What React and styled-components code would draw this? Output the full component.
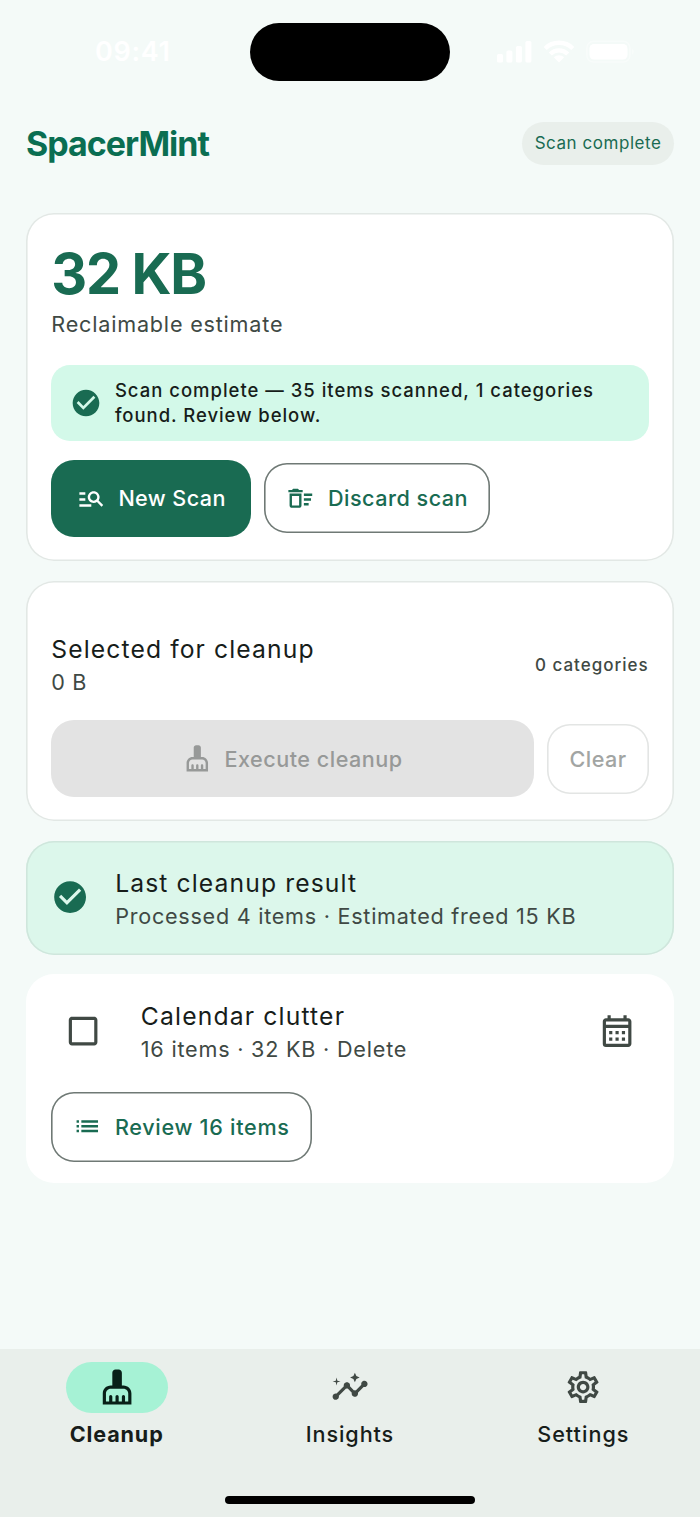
import React from "react";
import styled, { createGlobalStyle } from "styled-components";
import {
  MdCheckCircle,
  MdManageSearch,
  MdOutlineDeleteSweep,
  MdCheckBoxOutlineBlank,
  MdOutlineCalendarMonth,
  MdList,
  MdOutlineInsights,
  MdOutlineSettings,
} from "react-icons/md";

const c = {
  bg: "#f4faf8",
  brand: "#0a6e52",
  primary: "#196b52",
  ink: "#171d1a",
  muted: "#404944",
  surface: "#e9efeb",
  mint: "#d3f9e9",
  mintSoft: "#dcf7eb",
  pill: "#a6f2d5",
};

const GlobalStyle = createGlobalStyle`
  * { box-sizing: border-box; }
  body { margin: 0; background: ${c.bg}; font-family: Inter, "Liberation Sans", sans-serif; }
  button { font: inherit; }
  svg { display: block; flex: none; }
`;

const Screen = styled.div`
  width: 700px;
  height: 1517px;
  display: flex;
  flex-direction: column;
  background: ${c.bg};
  color: ${c.ink};
  overflow: hidden;
`;

const Label = styled.span`
  display: block;
  white-space: nowrap;
  width: max-content;
  font-size: ${(p) => p.$size}px;
  font-weight: ${(p) => p.$weight || 400};
  letter-spacing: ${(p) => p.$track || 0}px;
  line-height: ${(p) => p.$line || 32}px;
  color: ${(p) => p.$color || "inherit"};
`;

const StatusBar = styled.div`
  height: 103px;
  flex: none;
  display: grid;
  grid-template-columns: 250px 200px 250px;
  align-items: center;
  color: #fff;
`;
const Time = styled.div`
  padding: 1px 0 0 95px;
`;
const Island = styled.div`
  height: 58px;
  border-radius: 29px;
  background: #000;
`;
const Signals = styled.div`
  padding-left: 47px;
`;

const Header = styled.header`
  height: 80px;
  flex: none;
  padding: 0 26px;
  display: flex;
  align-items: center;
  justify-content: space-between;
`;
const Brand = styled.div`
  padding-top: 2px;
`;
const Chip = styled.div`
  height: 43px;
  padding: 0 12.5px 0 13px;
  border-radius: 22px;
  background: ${c.surface};
  display: flex;
  align-items: center;
`;

const Main = styled.main`
  flex: 1;
  padding: 30px 26px 0;
  display: flex;
  flex-direction: column;
  gap: 19.3px;
`;
const Card = styled.section`
  flex: none;
  height: ${(p) => p.$height}px;
  padding: 0 25.3px;
  border-radius: 28px;
  background: ${(p) => p.$bg || "#fff"};
  box-shadow: ${(p) => (p.$edge ? `inset 0 0 0 1.6px ${p.$edge}` : "none")};
  display: flex;
  flex-direction: column;
`;

const Estimate = styled.div`
  padding-top: 24px;
  height: 152px;
`;
const Amount = styled.div`
  height: 72px;
`;
const Banner = styled.div`
  height: 76px;
  padding: 0 18.6px;
  border-radius: 19px;
  background: ${c.mint};
  color: ${c.primary};
  display: flex;
  align-items: center;
  gap: 13px;
`;
const Actions = styled.div`
  display: flex;
  align-items: center;
  gap: 13px;
  margin-top: ${(p) => p.$top}px;
`;
const Button = styled.button`
  width: ${(p) => p.$width}px;
  height: 76.4px;
  flex: none;
  border: 0;
  padding: 0 0 0 ${(p) => p.$lead || 0}px;
  border-radius: 23px;
  background: ${(p) => p.$bg || c.primary};
  color: ${(p) => p.$color || "#fff"};
  display: flex;
  align-items: center;
  justify-content: ${(p) => (p.$lead ? "flex-start" : "center")};
  gap: 13px;
`;
const OutlineButton = styled(Button)`
  height: 70px;
  background: transparent;
  color: ${(p) => p.$color || c.primary};
  box-shadow: inset 0 0 0 1.6px ${(p) => p.$edge || "#6f7975"};
`;

const Tile = styled.div`
  height: ${(p) => p.$height}px;
  flex: none;
  padding: ${(p) => p.$pad || "0"};
  display: flex;
  align-items: center;
  gap: ${(p) => p.$gap || 0}px;
`;
const TileText = styled.div`
  flex: 1;
`;
const Trailing = styled.div`
  padding-top: 2px;
`;

const Nav = styled.nav`
  flex: none;
  height: 168.5px;
  background: ${c.surface};
  display: flex;
  flex-direction: column;
  justify-content: space-between;
  align-items: center;
  padding: 13.5px 0 13px;
`;
const Tabs = styled.div`
  width: 100%;
  display: grid;
  grid-template-columns: repeat(3, 1fr);
`;
const Tab = styled.div`
  display: flex;
  flex-direction: column;
  align-items: center;
  gap: 5px;
`;
const Pill = styled.div`
  width: 102px;
  height: 51px;
  border-radius: 26px;
  background: ${(p) => (p.$active ? c.pill : "transparent")};
  color: ${(p) => (p.$active ? "#082018" : c.muted)};
  display: flex;
  align-items: center;
  justify-content: center;
`;
const HomeBar = styled.div`
  width: 250px;
  height: 8px;
  border-radius: 4px;
  background: #000;
`;

function StatusIcons() {
  return (
    <svg width="140" height="24" viewBox="0 0 140 24" fill="#fff">
      <rect x="0" y="14" width="6" height="8.5" rx="1.6" />
      <rect x="9.4" y="10.4" width="6" height="12.1" rx="1.6" />
      <rect x="18.9" y="6" width="6" height="16.5" rx="1.6" />
      <rect x="28.4" y="1" width="6" height="21.5" rx="1.6" />
      <g fill="none" stroke="#fff" strokeWidth="4.4">
        <path d="M48.200 8.500a19.500 19.500 0 0 1 27.600 0" />
        <path d="M53.300 14a12.200 12.200 0 0 1 17.400 0" />
      </g>
      <path d="M62 22.500l-5.200-5.200a7.400 7.400 0 0 1 10.400 0z" />
      <rect x="89.9" y="1.3" width="43" height="20.8" rx="6.6" fill="none" stroke="#fff" strokeOpacity=".4" strokeWidth="1.5" />
      <rect x="92.5" y="3.9" width="38" height="15.6" rx="4.5" />
      <path d="M135.300 8.500q2.500 3.200 0 6.600z" fillOpacity=".5" />
    </svg>
  );
}

function BrushIcon({ size }) {
  return (
    <svg width={size} height={size} viewBox="0 0 24 24" fill="currentColor">
      <path d="M16 11h-1V3c0-1.100-.9-2-2-2h-2c-1.100 0-2 .9-2 2v8H8c-2.760 0-5 2.240-5 5v7h18v-7c0-2.760-2.240-5-5-5zm3 10h-2v-3c0-.55-.45-1-1-1s-1 .45-1 1v3h-2v-3c0-.55-.45-1-1-1s-1 .45-1 1v3H9v-3c0-.55-.45-1-1-1s-1 .45-1 1v3H5v-5c0-1.650 1.350-3 3-3h8c1.650 0 3 1.350 3 3v5z" />
    </svg>
  );
}

export default function App() {
  return (
    <>
      <GlobalStyle />
      <Screen>
        <StatusBar>
          <Time><Label $size={27} $weight={600} $track={0.7}>09:41</Label></Time>
          <Island />
          <Signals><StatusIcons /></Signals>
        </StatusBar>
        <Header>
          <Brand><Label $size={34} $weight={700} $track={-1} $line={44} $color={c.brand}>SpacerMint</Label></Brand>
          <Chip><Label $size={17} $track={0.55} $color={c.primary}>Scan complete</Label></Chip>
        </Header>
        <Main>
          <Card $height={348.3} $edge="#e2e8e5">
            <Estimate>
              <Amount><Label $size={55.7} $weight={700} $track={-1.3} $line={74} $color={c.primary}>32 KB</Label></Amount>
              <Label $size={21.6} $track={0.8} $line={30} $color={c.muted}>Reclaimable estimate</Label>
            </Estimate>
            <Banner>
              <MdCheckCircle size={32} />
              <div>
                <Label $size={18.5} $weight={500} $track={0.99} $line={25.4} $color={c.ink}>Scan complete — 35 items scanned, 1 categories</Label>
                <Label $size={18.5} $weight={500} $track={0.95} $line={25.4} $color={c.ink}>found. Review below.</Label>
              </div>
            </Banner>
            <Actions $top={19.3}>
              <Button $width={200} $lead={25.5}>
                <MdManageSearch size={28.6} />
                <Label $size={21.6} $weight={500} $track={0.4}>New Scan</Label>
              </Button>
              <OutlineButton $width={226} $lead={22}>
                <MdOutlineDeleteSweep size={28.6} />
                <Label $size={21.6} $weight={500} $track={0.5}>Discard scan</Label>
              </OutlineButton>
            </Actions>
          </Card>

          <Card $height={240.7} $edge="#e2e8e5">
            <Tile $height={139.9} $pad="26px 0 0">
              <TileText>
                <Label $size={24.7} $track={1.1} $line={36}>Selected for cleanup</Label>
                <Label $size={21.6} $track={0.6} $line={30} $color={c.muted}>0 B</Label>
              </TileText>
              <Trailing><Label $size={17} $weight={500} $track={1} $color={c.muted}>0 categories</Label></Trailing>
            </Tile>
            <Actions $top={0}>
              <Button $width={483} $bg="#e3e3e3" $color="#979998">
                <BrushIcon size={28.6} />
                <Label $size={21.6} $weight={500} $track={0.5}>Execute cleanup</Label>
              </Button>
              <OutlineButton $width={101.5} $color="#a2a5a3" $edge="#e3e5e4">
                <Label $size={21.6} $weight={500} $track={0.5}>Clear</Label>
              </OutlineButton>
            </Actions>
          </Card>

          <Card $height={114} $bg={c.mintSoft} $edge="#cfe6dc">
            <Tile $height={114} $gap={25.7}>
              <MdCheckCircle size={38.2} color={c.primary} />
              <TileText>
                <Label $size={24.7} $track={1.1} $line={36}>Last cleanup result</Label>
                <Label $size={21.6} $track={0.74} $line={30} $color={c.muted}>Processed 4 items · Estimated freed 15 KB</Label>
              </TileText>
            </Tile>
          </Card>

          <Card $height={209}>
            <Tile $height={113.5} $gap={38.8} $pad="0 12.5px">
              <MdCheckBoxOutlineBlank size={38.2} color={c.muted} />
              <TileText>
                <Label $size={24.7} $track={1.16} $line={36}>Calendar clutter</Label>
                <Label $size={21.6} $track={0.79} $line={30} $color={c.muted}>16 items · 32 KB · Delete</Label>
              </TileText>
              <MdOutlineCalendarMonth size={38.2} color={c.muted} />
            </Tile>
            <Actions $top={4.4}>
              <OutlineButton $width={260.5} $lead={22}>
                <MdList size={28.6} />
                <Label $size={21.6} $weight={500} $track={0.7}>Review 16 items</Label>
              </OutlineButton>
            </Actions>
          </Card>
        </Main>
        <Nav>
          <Tabs>
            <Tab>
              <Pill $active><BrushIcon size={38.2} /></Pill>
              <Label $size={21.6} $weight={700} $track={0.85}>Cleanup</Label>
            </Tab>
            <Tab>
              <Pill><MdOutlineInsights size={38.2} /></Pill>
              <Label $size={21.6} $weight={500} $track={0.9}>Insights</Label>
            </Tab>
            <Tab>
              <Pill><MdOutlineSettings size={38.2} /></Pill>
              <Label $size={21.6} $weight={500} $track={1}>Settings</Label>
            </Tab>
          </Tabs>
          <HomeBar />
        </Nav>
      </Screen>
    </>
  );
}
